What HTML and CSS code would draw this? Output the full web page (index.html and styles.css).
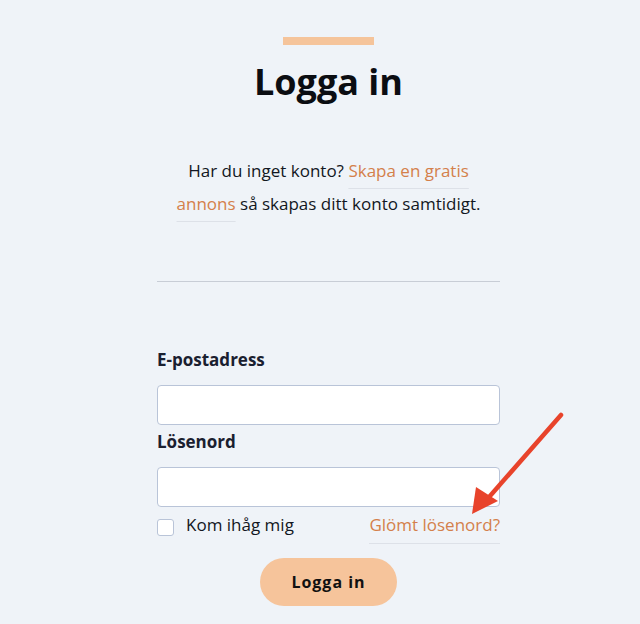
FILE: index.html
```html
<!DOCTYPE html>
<html lang="sv">
<head>
<meta charset="utf-8">
<link rel="stylesheet" href="styles.css">
</head>
<body>
<main class="page">
  <div class="card">
    <div class="accent"></div>
    <h1 class="title">Logga in</h1>
    <p class="intro">Har du inget konto? <a class="link" href="#">Skapa en gratis</a> <a class="link" href="#">annons</a> så skapas ditt konto samtidigt.</p>
    <hr class="divider">
    <form class="form">
      <label class="label" for="email">E-postadress</label>
      <input class="input" id="email" type="email">
      <label class="label" for="pw">Lösenord</label>
      <input class="input" id="pw" type="password">
      <div class="row">
        <label class="remember"><span class="box"></span>Kom ihåg mig</label>
        <a class="link forgot" href="#">Glömt lösenord?</a>
      </div>
      <div class="actions"><button class="btn" type="button">Logga in</button></div>
    </form>
  </div>
  <svg class="arrow" width="110" height="120" viewBox="0 0 110 120">
    <line x1="99" y1="7" x2="28" y2="88" stroke="#e8432b" stroke-width="4.5" stroke-linecap="round"/>
    <polygon points="10,106 14,79 36,93" fill="#e8432b"/>
  </svg>
</main>
</body>
</html>
```
FILE: styles.css
```css
html, body {
  margin: 0;
  padding: 0;
  background: #eff3f8;
}
body {
  font-family: "Open Sans", sans-serif;
  color: #111722;
}
.page {
  position: relative;
  width: 640px;
  height: 624px;
  overflow: hidden;
}
.card {
  width: 343px;
  margin-left: 157px;
  padding-top: 37px;
  display: flex;
  flex-direction: column;
  align-items: center;
}
.accent {
  width: 91px;
  height: 8px;
  background: #f5c49b;
}
.title {
  margin: 14px 0 0;
  font-family: "Open Sans", sans-serif;
  font-weight: 700;
  font-size: 36px;
  line-height: 46px;
  color: #0b0d12;
}
.intro {
  margin: 49px 0 0;
  width: 320px;
  text-align: center;
  font-size: 17px;
  line-height: 33px;
  color: #121722;
}
.link {
  color: #d4804b;
  text-decoration: underline;
  text-decoration-color: #dde1e8;
  text-decoration-thickness: 1px;
  text-underline-offset: 11px;
}
.divider {
  width: 100%;
  margin: 61px 0 0;
  border: 0;
  border-top: 1px solid #c8cdd6;
}
.form {
  width: 100%;
  margin-top: 67px;
  display: flex;
  flex-direction: column;
}
.label {
  font-weight: 700;
  font-size: 17px;
  line-height: 22px;
  color: #1a2030;
  margin-bottom: 14px;
}
.input {
  box-sizing: border-box;
  width: 100%;
  height: 40px;
  margin: 0 0 6px;
  border: 1px solid #b9c4d8;
  border-radius: 4px;
  background: #fff;
}
.row {
  display: flex;
  justify-content: space-between;
  align-items: flex-start;
}
.remember {
  display: flex;
  align-items: center;
  gap: 12px;
  font-size: 17px;
  line-height: 24px;
  color: #121722;
}
.box {
  width: 17px;
  height: 17px;
  margin-top: 4px;
  box-sizing: border-box;
  border: 1px solid #b9c4d8;
  border-radius: 3px;
  background: #fff;
}
.forgot {
  font-size: 17px;
  line-height: 24px;
  text-decoration: none;
  padding-bottom: 6px;
  border-bottom: 1px solid #dde1e8;
}
.actions {
  display: flex;
  justify-content: center;
  margin-top: 14px;
}
.btn {
  width: 137px;
  height: 48px;
  border: 0;
  border-radius: 24px;
  background: #f6c49b;
  font-family: "Open Sans", sans-serif;
  font-weight: 700;
  font-size: 16px;
  letter-spacing: 1px;
  color: #111;
}
.arrow {
  position: absolute;
  left: 462px;
  top: 408px;
}
```
